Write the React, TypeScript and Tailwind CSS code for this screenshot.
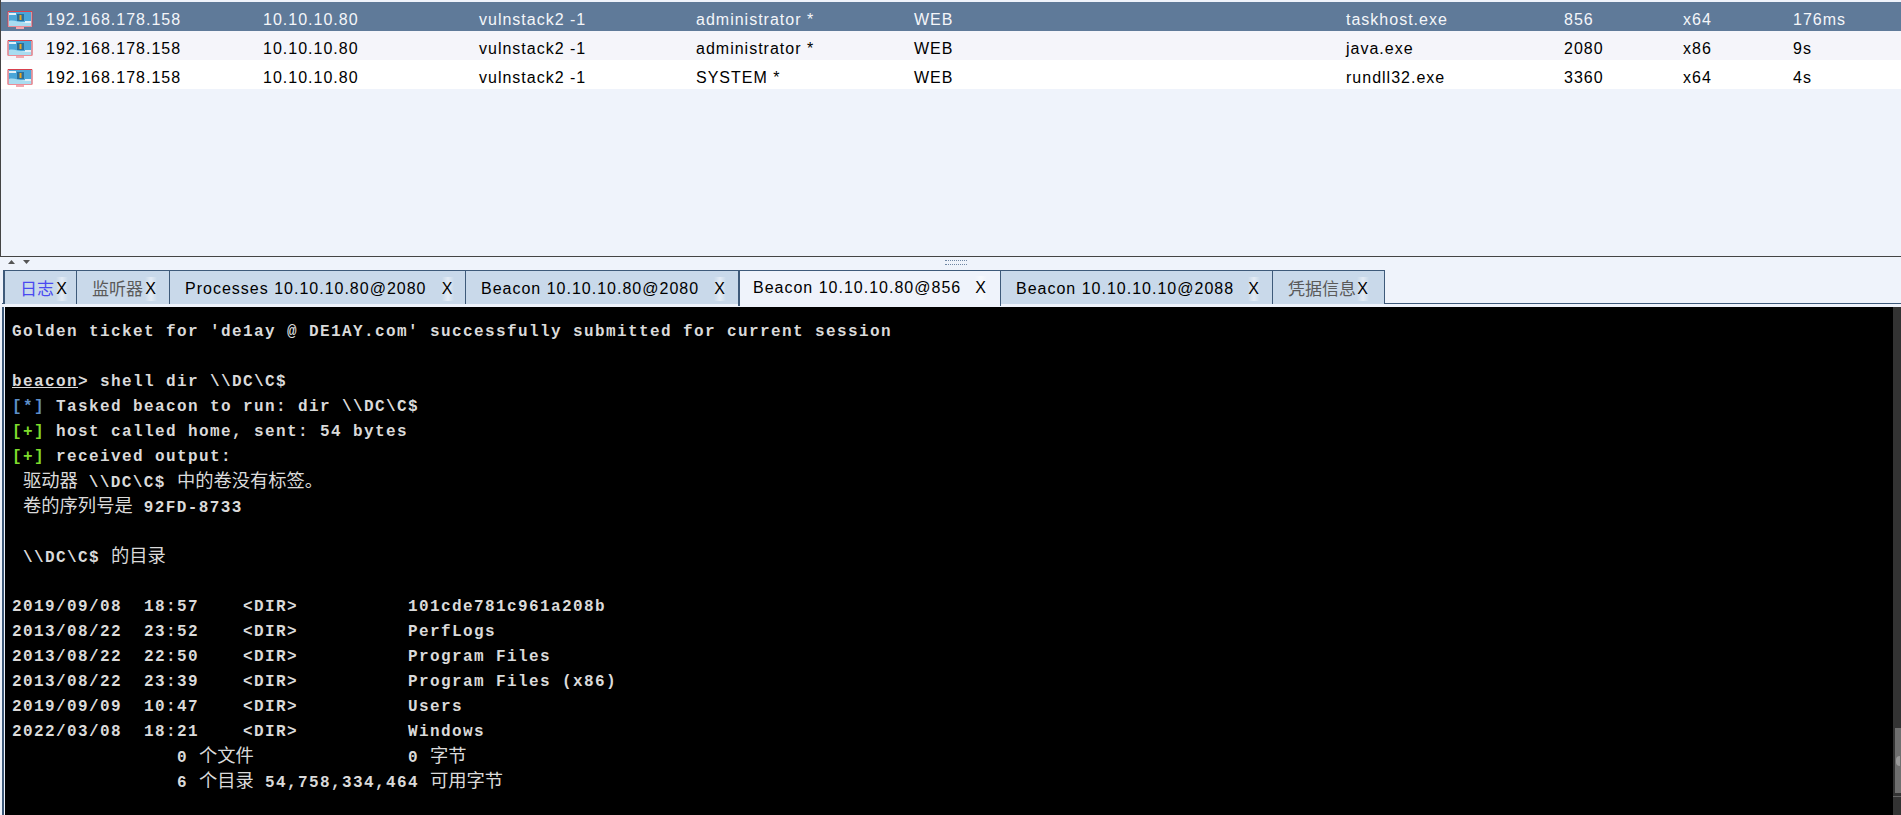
import React from "react";

const rows = [
  { user: "administrator *", proc: "taskhost.exe", pid: "856", arch: "x64", last: "176ms", cls: "bg-[#5f7a99] text-[#f4f6f9]" },
  { user: "administrator *", proc: "java.exe", pid: "2080", arch: "x86", last: "9s", cls: "bg-[#f5f5fa] text-black" },
  { user: "SYSTEM *", proc: "rundll32.exe", pid: "3360", arch: "x64", last: "4s", cls: "bg-white text-black" },
];

function MonitorIcon() {
  return (
    <svg width="26" height="19" viewBox="0 0 26 19" className="block">
      <rect x="9" y="15" width="8" height="3" fill="#f2a9b0" />
      <rect x="1" y="0.5" width="24" height="15" fill="#dcebf4" />
      <path d="M1 15.5 V0.5 H25 V15.5" fill="none" stroke="#d8414e" />
      <path d="M1 15.5 H25" stroke="#eb8d97" />
      <rect x="2" y="1" width="22" height="10" fill="#4ba6d8" />
      <path d="M2 10 C8 8 15 14 24 10 L24 15 L2 15 Z" fill="#a9dcf0" />
      <rect x="10" y="3" width="7" height="7" fill="#2c6f99" />
      <rect x="12.5" y="4" width="2" height="5" fill="#e9a522" />
      <path d="M2 2 H9 V4 H2 Z M18 10 H24 V12 H18 Z" fill="#e4f1f8" />
    </svg>
  );
}

function Cell({ w, children }: { w: string; children: React.ReactNode }) {
  return <div className={w}>{children}</div>;
}

function Tab({ label, w, cjk, color, active, gap }: { label: string; w: string; cjk?: boolean; color?: string; active?: boolean; gap: string }) {
  return (
    <div
      className={`${w} ${active ? "h-[36px] bg-[#eff3fb] border-l-2 border-r border-t border-[#3e5a7a] pb-[2px] -ml-px z-10 pl-[13px]" : "h-[34px] bg-[#c9d9ea] border-r border-t border-[#3e5a7a] pl-[15px] pt-[3px]"} flex items-center shrink-0`}
    >
      <span className={`${color ?? "text-black"} ${cjk ? "text-[17px] tracking-normal leading-none" : ""} whitespace-nowrap`}>{label}</span>
      <span className={`${gap} w-[12px] text-center text-black bg-gradient-to-r from-transparent via-white/50 to-transparent`}>X</span>
    </div>
  );
}

function C({ children }: { children: React.ReactNode }) {
  return <span className="font-['Noto_Sans_CJK_SC',sans-serif] font-normal text-[18.3px] leading-none tracking-normal">{children}</span>;
}

function Line({ children }: { children?: React.ReactNode }) {
  return <div className="h-[25px] leading-[25px] whitespace-pre">{children}</div>;
}

const dirs = [
  "2019/09/08  18:57    <DIR>          101cde781c961a208b",
  "2013/08/22  23:52    <DIR>          PerfLogs",
  "2013/08/22  22:50    <DIR>          Program Files",
  "2013/08/22  23:39    <DIR>          Program Files (x86)",
  "2019/09/09  10:47    <DIR>          Users",
  "2022/03/08  18:21    <DIR>          Windows",
];

export default function App() {
  return (
    <div className="w-[1901px] h-[815px] overflow-hidden flex flex-col bg-[#eff3fb] font-['Liberation_Sans','Noto_Sans_CJK_SC',sans-serif] text-[16px] tracking-[1px]">
      <div className="h-[257px] shrink-0 border-l border-b border-l-[#444] border-b-[#444] pt-[2px]">
        {rows.map((r, i) => (
          <div key={i} className={`h-[29px] pt-[6px] flex items-center ${r.cls}`}>
            <div className="w-[45px] pl-[6px] pt-[1px] shrink-0"><MonitorIcon /></div>
            <Cell w="w-[217px]">192.168.178.158</Cell>
            <Cell w="w-[216px]">10.10.10.80</Cell>
            <Cell w="w-[217px]">vulnstack2 -1</Cell>
            <Cell w="w-[218px]">{r.user}</Cell>
            <Cell w="w-[432px]">WEB</Cell>
            <Cell w="w-[218px]">{r.proc}</Cell>
            <Cell w="w-[119px]">{r.pid}</Cell>
            <Cell w="w-[110px]">{r.arch}</Cell>
            <Cell w="w-[80px]">{r.last}</Cell>
          </div>
        ))}
      </div>

      <div className="h-[13px] shrink-0 flex items-start pt-[1px]">
        <svg width="30" height="8" viewBox="0 0 30 8" className="ml-[7px]">
          <path d="M1 6 L4.5 2 L8 6 Z" fill="#555" />
          <path d="M16 2 H23 L19.5 6 Z" fill="#555" />
        </svg>
        <div className="ml-[908px] mt-[2px] w-[22px] h-[5px] border-y border-dotted border-[#6f86a3]" />
      </div>

      <div className="h-[37px] shrink-0 flex items-start pl-[3px] relative">
        <div className="absolute left-[2px] right-0 top-[33px] h-px bg-[#3e5a7a]" />
        <div className="flex items-start border-l-2 border-[#3e5a7a] h-[34px] relative">
          <Tab label="日志" w="w-[72px]" cjk color="text-[#4a4af0]" gap="ml-[2px]" />
          <Tab label="监听器" w="w-[93px]" cjk color="text-[#5a5a5a]" gap="ml-[2px]" />
          <Tab label="Processes 10.10.10.80@2080" w="w-[296px]" gap="ml-[15px]" />
          <Tab label="Beacon 10.10.10.80@2080" w="w-[273px]" gap="ml-[15px]" />
          <Tab label="Beacon 10.10.10.80@856" w="w-[263px]" active gap="ml-[14px]" />
          <Tab label="Beacon 10.10.10.10@2088" w="w-[272px]" gap="ml-[14px]" />
          <Tab label="凭据信息" w="w-[112px]" cjk color="text-[#5a5a5a]" gap="ml-[1px]" />
        </div>
      </div>

      <div className="flex-1 min-h-0 ml-[2px] border-l-2 border-[#3e5a7a] pl-px flex">
        <div className="flex-1 bg-black pt-[13px] pl-[7px] font-['Liberation_Mono','Noto_Sans_CJK_SC',monospace] font-bold text-[16px] tracking-[1.4px] text-[#dadada] overflow-hidden">
          <Line>Golden ticket for 'de1ay @ DE1AY.com' successfully submitted for current session</Line>
          <Line />
          <Line><span className="underline">beacon</span>{"> shell dir \\\\DC\\C$"}</Line>
          <Line><span className="text-[#5d8fc9]">[*]</span>{" Tasked beacon to run: dir \\\\DC\\C$"}</Line>
          <Line><span className="text-[#7fdc2c]">[+]</span> host called home, sent: 54 bytes</Line>
          <Line><span className="text-[#7fdc2c]">[+]</span> received output:</Line>
          <Line> <C>驱动器</C>{" \\\\DC\\C$ "}<C>中的卷没有标签。</C></Line>
          <Line> <C>卷的序列号是</C> 92FD-8733</Line>
          <Line />
          <Line>{" \\\\DC\\C$ "}<C>的目录</C></Line>
          <Line />
          {dirs.map((d) => <Line key={d}>{d}</Line>)}
          <Line>{"               0 "}<C>个文件</C>{"              0 "}<C>字节</C></Line>
          <Line>{"               6 "}<C>个目录</C>{" 54,758,334,464 "}<C>可用字节</C></Line>
        </div>
        <div className="w-[8px] shrink-0 bg-[#333] flex flex-col">
          <div className="h-[421px] shrink-0" />
          <div className="h-[65px] shrink-0 ml-[2px] bg-[#6f6f6f] flex items-center">
            <div className="w-[4px] h-[10px] ml-[1px] bg-[#9a9a9a] rounded-l-full" />
          </div>
          <div className="h-[3px] shrink-0" />
          <div className="h-px shrink-0 bg-[#666]" />
        </div>
      </div>
    </div>
  );
}
